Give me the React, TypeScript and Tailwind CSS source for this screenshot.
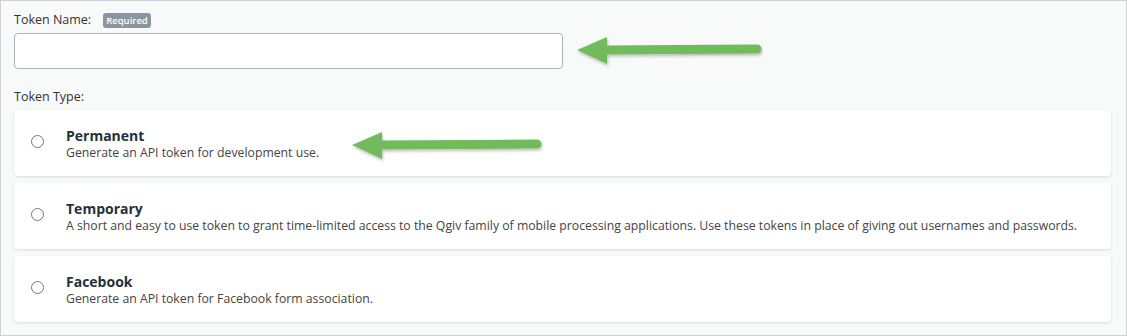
import React from "react";

const options = [
  { key: "permanent", title: "Permanent", desc: "Generate an API token for development use.", arrow: true },
  {
    key: "temporary",
    title: "Temporary",
    desc: "A short and easy to use token to grant time-limited access to the Qgiv family of mobile processing applications. Use these tokens in place of giving out usernames and passwords.",
    arrow: false,
  },
  { key: "facebook", title: "Facebook", desc: "Generate an API token for Facebook form association.", arrow: false },
];

const Arrow = ({ width }: { width: number }) => (
  <svg width={width} height="34" viewBox={`0 0 ${width} 34`} className="block">
    <defs>
      <filter id="arrowShadow" x="-10%" y="-40%" width="120%" height="180%">
        <feDropShadow dx="1" dy="2" stdDeviation="1.5" floodColor="#000" floodOpacity="0.25" />
      </filter>
    </defs>
    <g filter="url(#arrowShadow)">
      <line x1="26" y1="15" x2={width - 6} y2="14" stroke="#72bb5d" strokeWidth="9" strokeLinecap="round" />
      <polygon points="1,15 31,2 31,29" fill="#72bb5d" />
    </g>
  </svg>
);

export default function App() {
  return (
    <div
      className="w-[1127px] h-[336px] bg-[#f8f9f9] border border-[#cfd2d4] px-[13px] pt-[11px] text-[#333]"
      style={{ fontFamily: "'Open Sans', Lato, sans-serif" }}
    >
      <div className="flex items-center gap-[12px] h-[16px]">
        <span className="text-[12.5px]">Token Name:</span>
        <span className="bg-[#8b959d] text-white text-[9.5px] font-semibold rounded-[3px] px-[3px] leading-[15px]">
          Required
        </span>
      </div>
      <div className="flex items-center mt-[5px]">
        <input
          type="text"
          className="w-[549px] h-[36px] bg-white border border-[#a9b4bc] rounded-[4px] outline-none"
        />
        <div className="ml-[13px] mt-[2px]">
          <Arrow width={187} />
        </div>
      </div>

      <div className="text-[12.5px] mt-[20px] leading-[16px]">Token Type:</div>

      <div className="flex flex-col gap-[7px] mt-[5px] w-[1097px]">
        {options.map((o) => (
          <div
            key={o.key}
            className="bg-white rounded-[4px] shadow-[0_1px_3px_rgba(0,0,0,0.12)] h-[66px] flex items-center"
          >
            <div className="w-[48px] flex justify-center pr-[1px] mb-[3px]">
              <span className="block w-[13px] h-[13px] rounded-full border border-[#777] bg-white" />
            </div>
            <div className="flex flex-col ml-[4px]">
              <span className="text-[14px] font-bold text-[#25303b] leading-[18px]">{o.title}</span>
              <span className="text-[12.25px] text-[#444] leading-[15px]">{o.desc}</span>
            </div>
            {o.arrow && (
              <div className="ml-[32px] mt-[8px]">
                <Arrow width={192} />
              </div>
            )}
          </div>
        ))}
      </div>
    </div>
  );
}
